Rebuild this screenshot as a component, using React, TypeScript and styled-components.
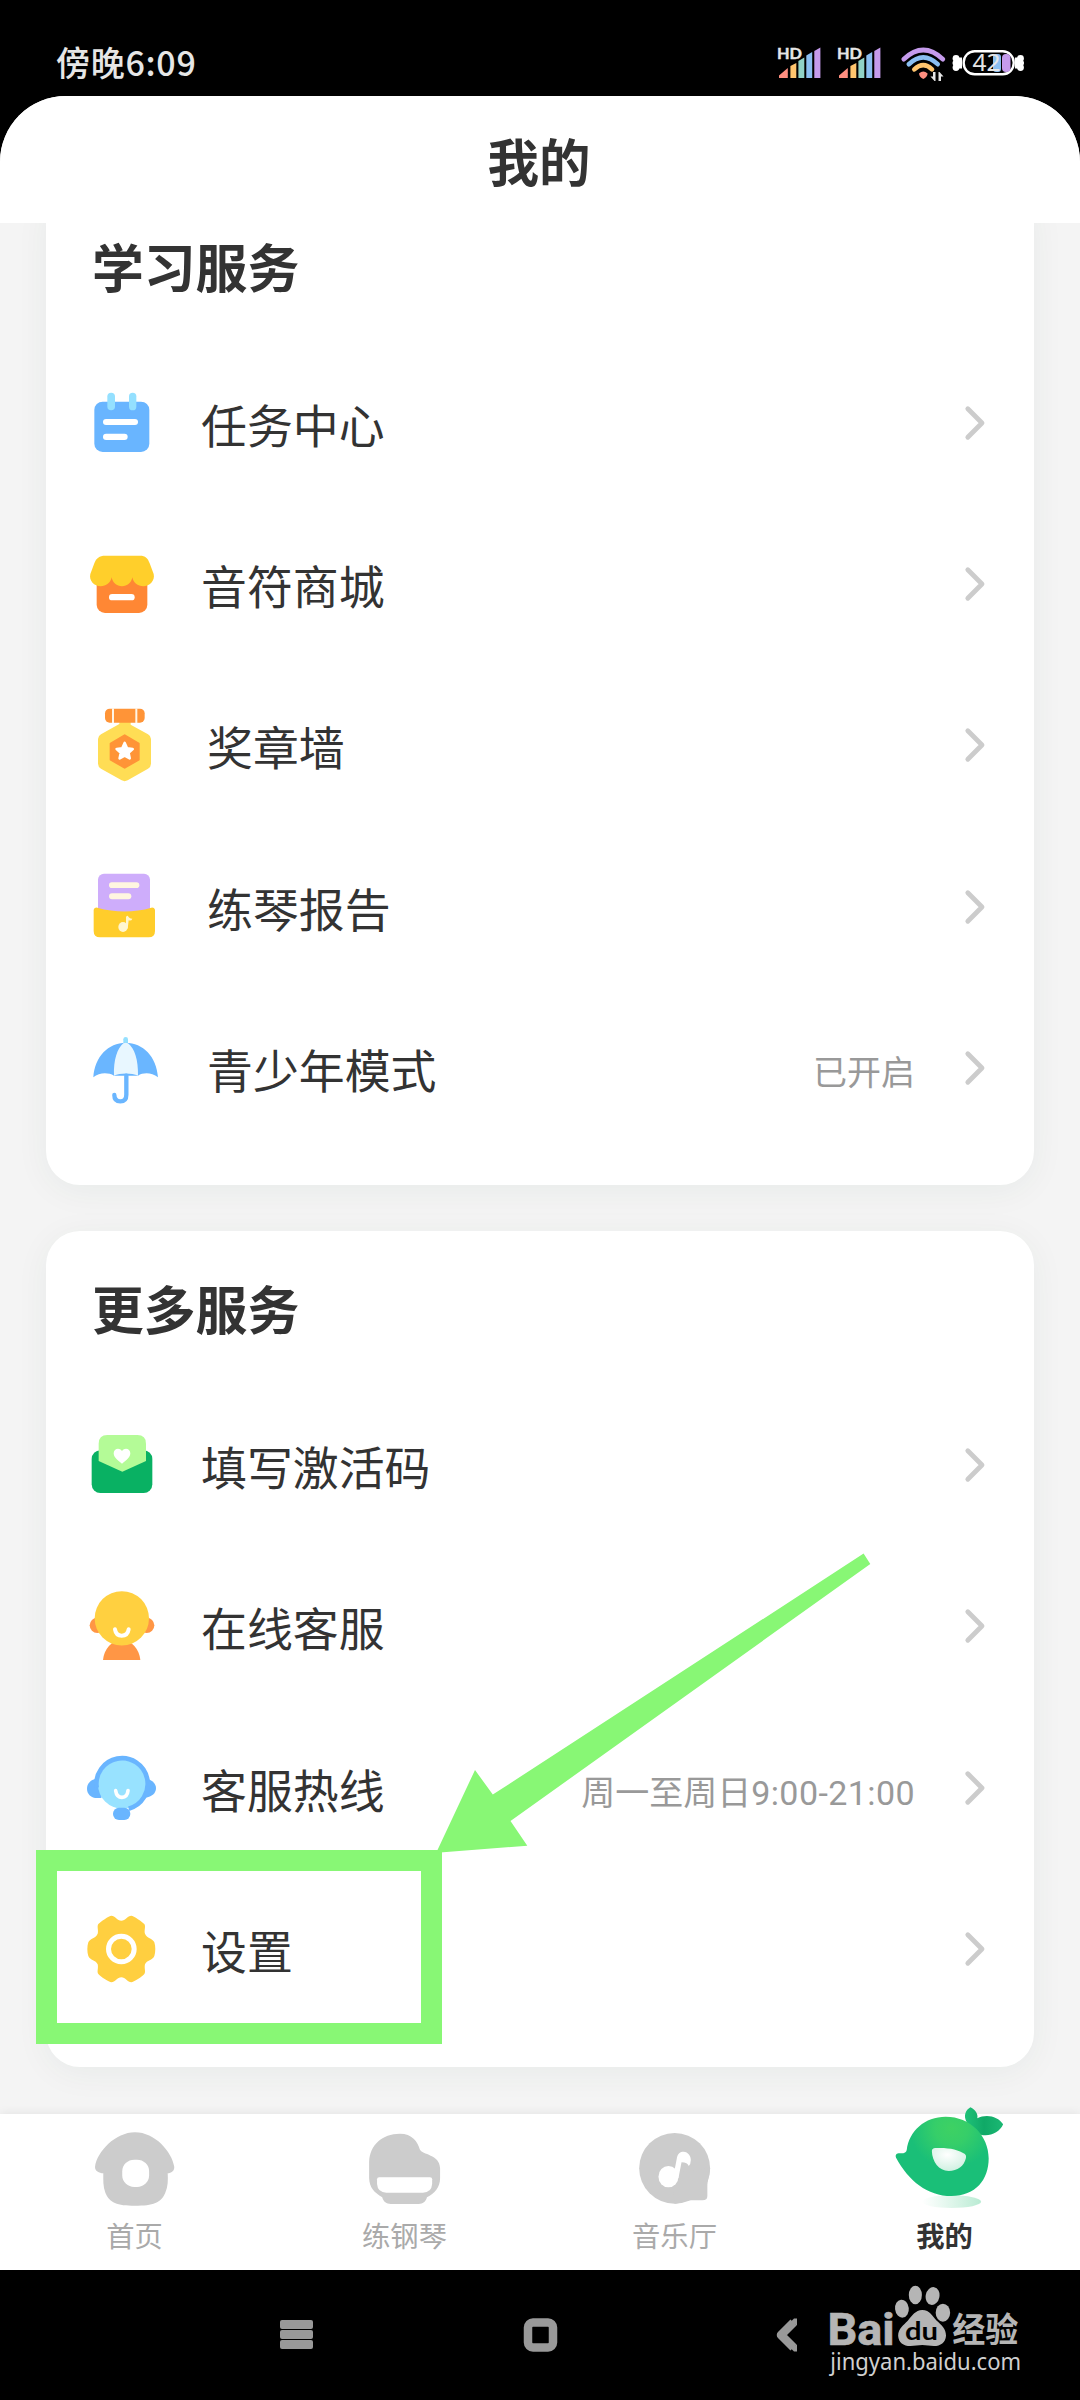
import React from "react";
import styled, { createGlobalStyle } from "styled-components";

const GlobalStyle = createGlobalStyle`
  * { box-sizing: border-box; }
  body {
    margin: 0;
    background: #000;
    font-family: Roboto, "Noto Sans CJK SC", sans-serif;
    color: #333;
  }
  svg { display: block; flex: none; overflow: visible; }
`;

const Phone = styled.div`
  position: relative;
  width: 1080px;
  height: 2400px;
  display: flex;
  flex-direction: column;
  overflow: hidden;
  background: #000;
`;

const StatusBar = styled.div`
  height: 96px;
  flex: none;
  display: flex;
  align-items: flex-start;
  justify-content: space-between;
  padding: 44px 55px 0 56px;
`;

const Clock = styled.div`
  font: 500 34px/36px "Noto Sans CJK SC", sans-serif;
  letter-spacing: 0.7px;
  color: #e6e6e6;
`;

const StatusIcons = styled.div`
  display: flex;
  align-items: flex-start;
  padding-top: 2px;
`;

const Signal = styled.svg`
  margin: 1px 16px 0 0;
`;

const Wifi = styled.svg`
  margin-left: 2px;
`;

const Battery = styled.svg`
  margin: 2px 0 0 5px;
`;

const Screen = styled.div`
  flex: 1;
  min-height: 0;
  display: flex;
  flex-direction: column;
  background: #f4f4f4;
  border-radius: 66px 66px 0 0;
  overflow: hidden;
`;

const Header = styled.header`
  height: 127px;
  flex: none;
  display: flex;
  align-items: center;
  justify-content: center;
  padding: 0 2px 0 0;
  background: #fff;
  font: 700 51.5px/60px "Noto Sans CJK SC", sans-serif;
`;

const Scroll = styled.main`
  flex: 1;
  min-height: 0;
  padding: 0 46px;
  overflow: hidden;
`;

const Card = styled.section<{ $scrolled?: boolean }>`
  background: #fff;
  border-radius: 34px;
  box-shadow: 0 6px 34px rgba(20, 70, 50, 0.055);
  margin-top: ${(p) => (p.$scrolled ? "-34px" : "46px")};
  padding-bottom: 37px;
`;

const CardTitle = styled.h2`
  margin: 0;
  height: 153px;
  padding: 47px 0 0 46px;
  font: 700 51.8px/60px "Noto Sans CJK SC", sans-serif;
`;

const Row = styled.div`
  display: flex;
  align-items: center;
  height: 161.3px;
  padding: 0 49px 0 36px;
`;

const Label = styled.span<{ $indent?: boolean }>`
  flex: 1;
  margin-left: ${(p) => (p.$indent ? 45 : 39)}px;
  font: 400 45.9px/60px "Noto Sans CJK SC", sans-serif;
`;

const Value = styled.span`
  margin-right: 50px;
  padding-top: 10px;
  font-size: 34px;
  line-height: 44px;
  color: #999;
`;

const Hours = styled.span`
  letter-spacing: 0.42px;
`;

const TabBar = styled.nav`
  position: relative;
  height: 156px;
  flex: none;
  display: grid;
  grid-template-columns: repeat(4, 1fr);
  background: #fff;
  box-shadow: 0 -1px 9px rgba(0, 0, 0, 0.07);
`;

const Tab = styled.div<{ $active?: boolean }>`
  display: flex;
  flex-direction: column;
  align-items: center;
  padding-top: 15px;
  font: ${(p) => (p.$active ? 700 : 400)} 28.3px/34px "Noto Sans CJK SC", sans-serif;
  color: ${(p) => (p.$active ? "#333" : "#aaa")};
`;

const TabLabel = styled.span`
  margin-top: 9px;
  padding-right: 1px;
`;

const MascotIcon = styled.svg`
  margin: -27px 0 -3px;
`;

const SystemNav = styled.div`
  position: relative;
  height: 130px;
  flex: none;
  display: flex;
  align-items: center;
  justify-content: space-between;
  padding: 0 274px 0 276px;
`;

const Watermark = styled.svg`
  position: absolute;
  left: 825px;
  top: 10px;
`;

const HighlightBox = styled.div`
  position: absolute;
  left: 36px;
  top: 1850px;
  width: 406px;
  height: 194px;
  border: 21px solid #88f775;
`;

const HighlightArrow = styled.svg`
  position: absolute;
  left: 430px;
  top: 1545px;
`;

function SignalIcon() {
  return (
    <Signal width="44" height="32" viewBox="0 0 44 32">
      <path d="M1 31V28.500L9.800 21V31Z" fill="#ff8f80" />
      <path d="M12.400 31V19L18.300 16V31Z" fill="#ffc56e" />
      <path d="M20.400 31V14L26.300 10.500V31Z" fill="#90d2c6" />
      <path d="M28.300 31V8.500L34.200 5V31Z" fill="#8abef1" />
      <path d="M36.300 31V4L42.400 0.500V31Z" fill="#c59bec" />
      <text x="-1" y="12" fontFamily="Lato, sans-serif" fontWeight="700" fontSize="15.500" textLength="25" lengthAdjust="spacingAndGlyphs" fill="#e6e6e6" stroke="#e6e6e6" strokeWidth="0.400">HD</text>
    </Signal>
  );
}

function WifiIcon() {
  return (
    <Wifi width="46" height="36" viewBox="0 0 46 36" fill="none" strokeWidth="4.600" strokeLinecap="round">
      <path d="M3.700 13.200Q23.300 -5.200 42.900 13.200" stroke="#c59bec" />
      <path d="M8.800 18.200Q23.300 4.600 37.700 18.200" stroke="#8abef1" />
      <path d="M14.300 23.300Q23.300 14.800 32 23.300" stroke="#ffc56e" />
      <path d="M19 27.500Q23.300 23.500 27.600 27.500Q27.200 31 23.300 33Q19.400 31 19 27.500Z" fill="#ff8f80" />
      <path d="M35.500 26V35H34.500L30.500 30.500H33V26ZM38.500 35V26H39.500L43.500 30.500H41V35Z" fill="#e6e6e6" />
    </Wifi>
  );
}

function BatteryIcon() {
  return (
    <Battery width="74" height="30" viewBox="0 0 74 30">
      <g fill="#fff">
        <circle cx="5" cy="10.500" r="3.400" /><circle cx="5" cy="19.500" r="3.400" />
        <circle cx="4.300" cy="15" r="2.800" /><rect x="5" y="9.500" width="6" height="11" />
        <circle cx="69.500" cy="10.500" r="3.400" /><circle cx="69.500" cy="19.500" r="3.400" />
        <circle cx="70.200" cy="15" r="2.800" /><rect x="64" y="9.500" width="6" height="11" />
      </g>
      <rect x="12.700" y="3.300" width="50" height="23" rx="11" fill="#000" stroke="#fff" strokeWidth="2.400" />
      <rect x="42" y="6" width="8" height="18" rx="3" fill="#8abef1" />
      <rect x="51" y="6" width="8.500" height="18" rx="4" fill="#c59bec" />
      <text x="21.500" y="23.200" fontFamily="'Noto Sans', sans-serif" fontSize="23.500" textLength="28" lengthAdjust="spacingAndGlyphs" fill="#e6e6e6">42</text>
    </Battery>
  );
}

function Glyph({ box, children }: { box: string; children: React.ReactNode }) {
  return (
    <svg width="80" height="80" viewBox={box}>
      {children}
    </svg>
  );
}

const TaskIcon = () => (
  <Glyph box="66 39 240 240">
    <rect x="103" y="95" width="165" height="151" rx="25" fill="#69b5ff" />
    <rect x="142" y="68" width="23" height="53" rx="11.500" fill="#94e0ff" />
    <rect x="207" y="68" width="22" height="53" rx="11" fill="#94e0ff" />
    <rect x="129" y="147" width="105" height="18" rx="9" fill="#fff" />
    <rect x="129" y="191" width="74" height="19" rx="9.500" fill="#fff" />
  </Glyph>
);

const ShopIcon = () => (
  <Glyph box="66 522 240 240">
    <rect x="110" y="600" width="152" height="129" rx="25" fill="#ff8734" />
    <path d="M135 557H240C256 557 264 565 269 580L281 612C286 632 268 649 250 649C233 649 220 638 217 622C214 638 202 649 186 649C170 649 158 638 155 622C152 638 138 649 122 649C103 649 86 632 91 612L103 580C108 565 119 557 135 557Z" fill="#ffcf2b" />
    <rect x="147" y="672" width="77" height="19" rx="9.500" fill="#fff" />
  </Glyph>
);

const MedalIcon = () => (
  <Glyph box="66 76 240 240">
    <path d="M178 122H212V135L264 164Q273 169 273 178V252Q273 261 264 267L203 302Q194 307 185 302L123 267Q114 261 114 252V178Q114 169 123 164L178 133Z" fill="#ffdd55" />
    <rect x="135" y="87" width="119" height="42" rx="14" fill="#ff9437" />
    <path d="M159 86V130M229 86V130" stroke="#fff5e6" strokeWidth="6" />
    <path d="M194 167L236 191.500V240L194 264L152 240V191.500Z" fill="#ff9437" stroke="#ff9437" strokeWidth="6" strokeLinejoin="round" />
    <path d="M194 190L201 206L218 208L205.500 219.500L209 236L194 228L179 236L182.500 219.500L170 208L187 206Z" fill="#fff" stroke="#fff" strokeWidth="8" strokeLinejoin="round" />
  </Glyph>
);

const ReportIcon = () => (
  <Glyph box="66 560 240 240">
    <rect x="114" y="580" width="156" height="125" rx="18" fill="#ceadfb" />
    <rect x="147" y="606" width="91" height="17" rx="8.500" fill="#fff6e0" />
    <rect x="147" y="639" width="67" height="18" rx="9" fill="#fff6e0" />
    <path d="M101 688Q103 681 112 682C165 697 223 697 274 682Q283 681 285 688V752Q285 771 266 771H120Q101 771 101 752Z" fill="#ffcd2b" />
    <ellipse cx="189" cy="740" rx="14" ry="15" fill="#fff6d0" />
    <path d="M198 742V711Q199 705 204 707Q206 714 217 715Q214 723 206 720L203 745Z" fill="#fff6d0" />
  </Glyph>
);

const UmbrellaIcon = () => (
  <Glyph box="66 1044 240 240">
    <rect x="190" y="1071" width="14" height="26" rx="7" fill="#94e0ff" />
    <path d="M100 1192C104 1130 145 1088 197 1088C249 1088 290 1130 294 1192C275 1177 250 1177 234 1187H162C145 1177 118 1177 100 1192Z" fill="#6ab6ff" />
    <path d="M162 1187C160 1140 172 1105 190 1090Q197 1086 204 1090C224 1105 235 1140 234 1187C215 1178 180 1178 162 1187Z" fill="#e8f7ff" />
    <path d="M199 1187V1244Q199 1264 181 1264Q163 1264 163 1245" fill="none" stroke="#6ab6ff" strokeWidth="13" strokeLinecap="round" />
  </Glyph>
);

const EnvelopeIcon = () => (
  <Glyph box="156 616 240 240">
    <rect x="185" y="692" width="182" height="128" rx="26" fill="#09b163" />
    <path d="M206 672Q206 646 232 646H322Q348 646 348 672V724L277 756L206 724Z" fill="#b4fb97" />
    <path d="M276 732C262 722 251 712 251 701C251 688 267 682 276 694C285 682 301 688 301 701C301 712 290 722 276 732Z" fill="#fff" />
  </Glyph>
);

const SupportIcon = () => (
  <Glyph box="156 1100 240 240">
    <circle cx="202" cy="1218" r="23" fill="#ff9645" />
    <circle cx="350" cy="1218" r="23" fill="#ff9645" />
    <path d="M219 1322C222 1290 245 1262 275 1262C305 1262 328 1290 331 1322Z" fill="#ff9645" />
    <circle cx="275.500" cy="1197" r="81.500" fill="#ffd040" />
    <path d="M255 1230Q258 1249 275 1249Q293 1249 296 1230" fill="none" stroke="#fff" strokeWidth="12" strokeLinecap="round" />
  </Glyph>
);

const HotlineIcon = () => (
  <Glyph box="156 264 240 240">
    <path d="M200 356C180 359 171 372 171 386C171 402 183 414 202 414H214L222 370Z" fill="#69b5ff" />
    <path d="M350 356C368 360 378 372 378 384C378 400 366 410 346 413Z" fill="#69b5ff" />
    <circle cx="277" cy="373" r="73" fill="#98e2ff" />
    <path d="M200 383A77 77 0 1 1 296 446" fill="none" stroke="#69b5ff" strokeWidth="14" />
    <rect x="249" y="443" width="52" height="37" rx="18" fill="#69b5ff" />
    <path d="M257 392Q260 412 276 412Q292 412 294 392" fill="none" stroke="#fff" strokeWidth="11" strokeLinecap="round" />
  </Glyph>
);

const GearIcon = () => (
  <Glyph box="156 748 240 240">
    <path d="M274 783C286 783 293 768 304 768C310 768 338 787 343 793C348 800 342 812 345 822C350 836 368 835 373 848C377 860 377 877 373 889C368 902 350 901 345 914C342 925 348 937 343 943C338 950 310 968 304 968C293 968 286 953 274 953C262 953 255 968 244 968C238 968 210 950 205 943C200 937 206 925 203 914C198 901 180 902 175 889C171 877 171 860 175 848C180 835 198 836 203 822C206 812 200 800 205 793C210 787 238 768 244 768C255 768 262 783 274 783Z" fill="#ffcf40" />
    <circle cx="274" cy="868" r="38.500" fill="none" stroke="#fff" strokeWidth="15" />
  </Glyph>
);

const Chevron = () => (
  <svg width="20" height="36" viewBox="0 0 20 36" fill="none">
    <path d="M2.800 3.700L17 18L2.800 32.300" stroke="#ccc" strokeWidth="4.800" strokeLinecap="round" strokeLinejoin="round" />
  </svg>
);

function TabGlyph({ box, children }: { box: string; children: React.ReactNode }) {
  return (
    <svg width="80" height="80" viewBox={box} preserveAspectRatio="none" fill="#ccc">
      {children}
    </svg>
  );
}

const HomeIcon = () => (
  <TabGlyph box="275.9 117 232.3 240">
    <path d="M392 127C450 127 499 185 506 230C507 243 497 249 487 250C488 270 488 290 480 308C468 338 445 347 392 347C340 347 318 338 306 308C299 290 300 270 300 250C288 249 275 243 276 230C282 185 335 127 392 127Z" />
    <rect x="355" y="209" width="78" height="82" rx="35" fill="#fff" />
  </TabGlyph>
);

const PianoIcon = () => (
  <TabGlyph box="1060 117 232.3 240">
    <path d="M1161 131C1197 131 1213 155 1219 178C1226 196 1277 192 1278 235V265C1278 293 1262 310 1240 322C1236 336 1228 342 1216 342H1135C1122 342 1114 336 1110 322C1087 308 1073 293 1072 265V215C1074 165 1110 131 1161 131Z" />
    <path d="M1101 262H1249Q1255 262 1255 268V282Q1253 308 1228 308H1122Q1097 308 1095 282V268Q1095 262 1101 262Z" fill="#fff" />
  </TabGlyph>
);

const MusicIcon = () => (
  <TabGlyph box="275.9 117 232.3 240">
    <ellipse cx="391" cy="235" rx="103" ry="106" />
    <path d="M494 235C492 260 486 272 486 290V318Q486 331 472 331H440C420 331 410 341 391 341L380 250Z" />
    <ellipse cx="373" cy="260" rx="29" ry="32" fill="#fff" />
    <path d="M389 250L397 207C399 190 408 185 417 185C430 186 438 197 438 210Q438 222 432 228Q429 218 411 217L402 265L393 268Z" fill="#fff" />
  </TabGlyph>
);

const Mascot = () => (
  <MascotIcon width="120" height="110" viewBox="1001.9 36 348.5 330" preserveAspectRatio="none">
    <defs>
      <radialGradient id="body" gradientUnits="userSpaceOnUse" cx="1195" cy="115" r="120">
        <stop offset="0" stopColor="#3ed163" />
        <stop offset="0.4" stopColor="#36ce69" />
        <stop offset="1" stopColor="#1abf78" />
      </radialGradient>
      <linearGradient id="leaf" x1="0" x2="1">
        <stop offset="0" stopColor="#1fc178" />
        <stop offset="0.5" stopColor="#10a967" />
        <stop offset="1" stopColor="#1bb873" />
      </linearGradient>
      <radialGradient id="mouth" cx="0.45" cy="0.3" r="0.8">
        <stop offset="0" stopColor="#fff" />
        <stop offset="1" stopColor="#c9eedd" />
      </radialGradient>
      <linearGradient id="shade" x1="0" x2="1">
        <stop offset="0" stopColor="#c2eed9" stopOpacity="0" />
        <stop offset="1" stopColor="#b9ebd3" />
      </linearGradient>
    </defs>
    <ellipse cx="1195" cy="335" rx="86" ry="19" fill="url(#shade)" />
    <path d="M1240 98C1228 78 1236 60 1250 52C1265 60 1273 73 1270 85C1295 71 1330 78 1345 103C1335 128 1305 141 1280 134Z" fill="url(#leaf)" />
    <path d="M1034 203C1030 193 1038 189 1046 190Q1063 191 1065 180C1072 122 1118 80 1178 80C1250 80 1303 137 1303 205C1303 270 1265 318 1195 318C1125 318 1070 272 1034 203Z" fill="url(#body)" />
    <path d="M1138 183Q1138 175 1148 174C1185 172 1215 178 1234 192Q1239 196 1237 204C1232 228 1212 243 1187 243C1158 243 1139 215 1138 183Z" fill="url(#mouth)" />
  </MascotIcon>
);

const MenuKey = () => (
  <svg width="40" height="40" viewBox="0 0 40 40" fill="#999">
    <rect x="4" y="5" width="33" height="9" rx="2" />
    <rect x="4" y="15" width="33" height="9" rx="2" />
    <rect x="4" y="25" width="33" height="9" rx="2" />
  </svg>
);

const HomeKey = () => (
  <svg width="40" height="40" viewBox="0 0 40 40">
    <rect x="7" y="7.500" width="25" height="25" rx="5" fill="none" stroke="#999" strokeWidth="8.500" />
  </svg>
);

const BackKey = () => (
  <svg width="40" height="40" viewBox="0 0 40 40">
    <path d="M27.500 7.500L15 20L27.500 32.500" fill="none" stroke="#999" strokeWidth="8.500" strokeLinecap="butt" strokeLinejoin="round" />
    <path d="M24 7.500L28 3.500H31V10.500ZM24 32.500L28 36.500H31V29.500Z" fill="#999" />
  </svg>
);

const BrandMark = () => (
  <Watermark width="200" height="100" viewBox="827.6 570 580.8 300" preserveAspectRatio="none" fill="#b5b5b5">
    <text x="835" y="764" fontFamily="Roboto, sans-serif" fontWeight="700" fontSize="131" textLength="195" lengthAdjust="spacingAndGlyphs" stroke="#b5b5b5" strokeWidth="2">Bai</text>
    <ellipse cx="1051" cy="656" rx="20" ry="27" transform="rotate(-6 1051 656)" />
    <ellipse cx="1090" cy="615" rx="19" ry="28" />
    <ellipse cx="1140" cy="618" rx="20" ry="27" transform="rotate(10 1140 618)" />
    <ellipse cx="1170" cy="668" rx="21" ry="27" />
    <path d="M1110 660C1132 660 1140 680 1152 692C1166 705 1179 715 1179 737C1178 757 1163 768 1144 768C1132 768 1122 765 1110 765C1098 765 1088 768 1076 768C1055 768 1041 757 1040 737C1040 715 1056 705 1068 692C1080 678 1090 660 1110 660Z" />
    <text x="1060" y="749" fontFamily="Lato, sans-serif" fontWeight="700" fontSize="72" fill="#000" textLength="96" lengthAdjust="spacingAndGlyphs">du</text>
    <text x="1197" y="757" fontFamily="'Noto Sans CJK SC', sans-serif" fontWeight="700" fontSize="103" textLength="192" lengthAdjust="spacingAndGlyphs">经验</text>
    <text x="843" y="840" fontFamily="'Noto Sans', sans-serif" fontSize="69" fill="#d0d0d0" textLength="554" lengthAdjust="spacingAndGlyphs">jingyan.baidu.com</text>
  </Watermark>
);

interface Item {
  icon: React.ReactNode;
  label: string;
  value?: React.ReactNode;
  indent?: boolean;
}

const studyItems: Item[] = [
  { icon: <TaskIcon />, label: "任务中心" },
  { icon: <ShopIcon />, label: "音符商城" },
  { icon: <MedalIcon />, label: "奖章墙", indent: true },
  { icon: <ReportIcon />, label: "练琴报告", indent: true },
  { icon: <UmbrellaIcon />, label: "青少年模式", value: "已开启", indent: true },
];

const moreItems: Item[] = [
  { icon: <EnvelopeIcon />, label: "填写激活码" },
  { icon: <SupportIcon />, label: "在线客服" },
  { icon: <HotlineIcon />, label: "客服热线", value: <>周一至周日<Hours>9:00-21:00</Hours></> },
  { icon: <GearIcon />, label: "设置" },
];

function ServiceCard({ title, items, scrolled }: { title: string; items: Item[]; scrolled?: boolean }) {
  return (
    <Card $scrolled={scrolled}>
      <CardTitle>{title}</CardTitle>
      {items.map((item) => (
        <Row key={item.label}>
          {item.icon}
          <Label $indent={item.indent}>{item.label}</Label>
          {item.value && <Value>{item.value}</Value>}
          <Chevron />
        </Row>
      ))}
    </Card>
  );
}

export default function App() {
  return (
    <>
      <GlobalStyle />
      <Phone>
        <StatusBar>
          <Clock>傍晚6:09</Clock>
          <StatusIcons>
            <SignalIcon />
            <SignalIcon />
            <WifiIcon />
            <BatteryIcon />
          </StatusIcons>
        </StatusBar>
        <Screen>
          <Header>我的</Header>
          <Scroll>
            <ServiceCard title="学习服务" items={studyItems} scrolled />
            <ServiceCard title="更多服务" items={moreItems} />
          </Scroll>
          <TabBar>
            <Tab><HomeIcon /><TabLabel>首页</TabLabel></Tab>
            <Tab><PianoIcon /><TabLabel>练钢琴</TabLabel></Tab>
            <Tab><MusicIcon /><TabLabel>音乐厅</TabLabel></Tab>
            <Tab $active><Mascot /><TabLabel>我的</TabLabel></Tab>
          </TabBar>
        </Screen>
        <SystemNav>
          <MenuKey />
          <HomeKey />
          <BackKey />
          <BrandMark />
        </SystemNav>
        <HighlightBox />
        <HighlightArrow width="450" height="315" viewBox="430 1545 450 315">
          <path d="M436.800 1851.500L475 1770L492.800 1794.600L863.600 1553.600L870.300 1564L510.500 1821L527.300 1845.700L440 1852.500Z" fill="#88f775" />
        </HighlightArrow>
      </Phone>
    </>
  );
}
